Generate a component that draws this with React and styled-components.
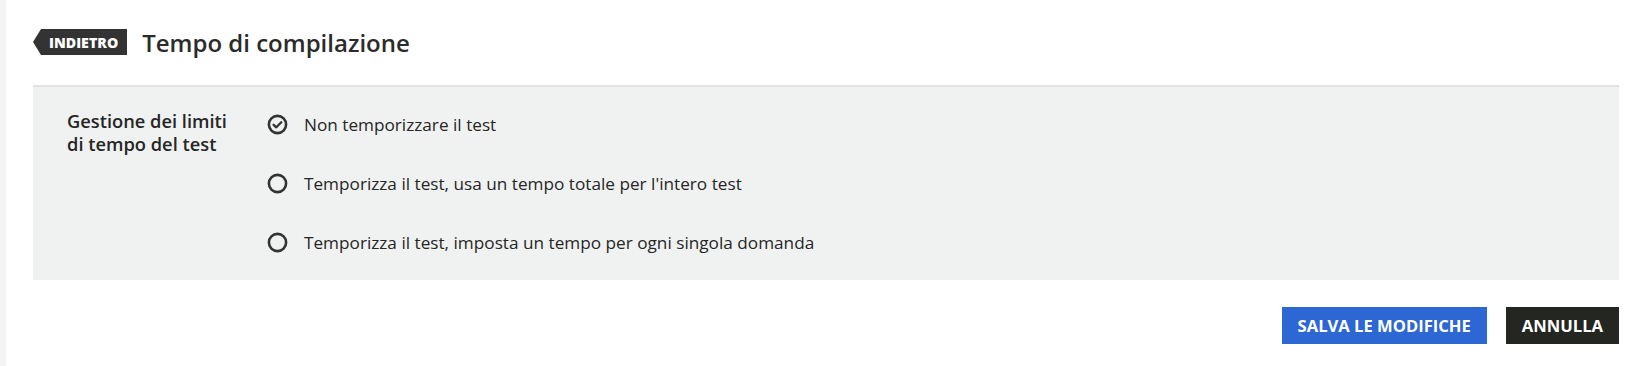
import styled, { createGlobalStyle } from "styled-components"

const GlobalStyle = createGlobalStyle`
    body {
        margin: 0;
        background: #fff;
        font-family: "Open Sans", "Liberation Sans", sans-serif;
        color: #262626;
    }
`

const Page = styled.div`
    display: flex;
    min-height: 366px;
`
const SideStrip = styled.div`
    width: 6px;
    background: #f3f3f3;
`
const Main = styled.div`
    flex: 1;
    padding: 29px 23px 0 27px;
`
const Header = styled.div`
    display: flex;
    align-items: center;
    gap: 15px;
    height: 26px;
    margin-bottom: 30px;
`
const BackTag = styled.span`
    display: flex;
    align-items: center;
    height: 26px;
    padding: 0 9px 0 16px;
    background: #333333;
    color: #fff;
    font-size: 14.2px;
    font-weight: 800;
    clip-path: polygon(8px 0, 100% 0, 100% 100%, 8px 100%, 0 50%);
`
const Title = styled.h1`
    margin: 0;
    font-size: 24px;
    font-weight: 600;
    color: #2b2b2b;
`
const Panel = styled.div`
    display: grid;
    grid-template-columns: 200px 1fr;
    background: #f0f2f1;
    border-top: 2px solid #e3e3e3;
    padding: 22px 34px 26px;
`
const Label = styled.div`
    font-size: 18.3px;
    font-weight: 600;
    line-height: 23px;
`
const Options = styled.div`
    display: flex;
    flex-direction: column;
    gap: 35px;
    margin-top: 3px;
`
const Option = styled.label`
    display: flex;
    align-items: center;
    gap: 16px;
    height: 24px;
    font-size: 17.2px;
    cursor: pointer;
`
const Actions = styled.div`
    display: flex;
    justify-content: flex-end;
    gap: 19px;
    margin-top: 27px;
`
const Button = styled.button`
    height: 37px;
    padding: 0 16px;
    border: none;
    background: ${props => props.$primary ? "#2d67d4" : "#242622"};
    color: #fff;
    font-family: "Open Sans", "Liberation Sans", sans-serif;
    font-size: 16.6px;
    font-weight: 700;
    cursor: pointer;
`

const RadioIcon = ({ checked }) => (
  <svg width="21" height="21" viewBox="0 0 21 21">
    <circle cx="10.5" cy="10.5" r="8.6" fill="none" stroke="#333" strokeWidth="2.6" />
    {checked && (
      <path d="M6.6 10.8 L9.3 13.3 L14.3 8.2" fill="none" stroke="#333" strokeWidth="2.3" strokeLinecap="round" strokeLinejoin="round" />
    )}
  </svg>
)

const options = [
  { text: "Non temporizzare il test", checked: true },
  { text: "Temporizza il test, usa un tempo totale per l'intero test" },
  { text: "Temporizza il test, imposta un tempo per ogni singola domanda" },
]

const App = () => {
  return (
    <>
      <GlobalStyle />
      <Page>
        <SideStrip />
        <Main>
          <Header>
            <BackTag>INDIETRO</BackTag>
            <Title>Tempo di compilazione</Title>
          </Header>
          <Panel>
            <Label>Gestione dei limiti<br />di tempo del test</Label>
            <Options>
              {options.map(o => (
                <Option key={o.text}>
                  <RadioIcon checked={o.checked} />
                  {o.text}
                </Option>
              ))}
            </Options>
          </Panel>
          <Actions>
            <Button $primary>SALVA LE MODIFICHE</Button>
            <Button>ANNULLA</Button>
          </Actions>
        </Main>
      </Page>
    </>
  )
}

export default App
